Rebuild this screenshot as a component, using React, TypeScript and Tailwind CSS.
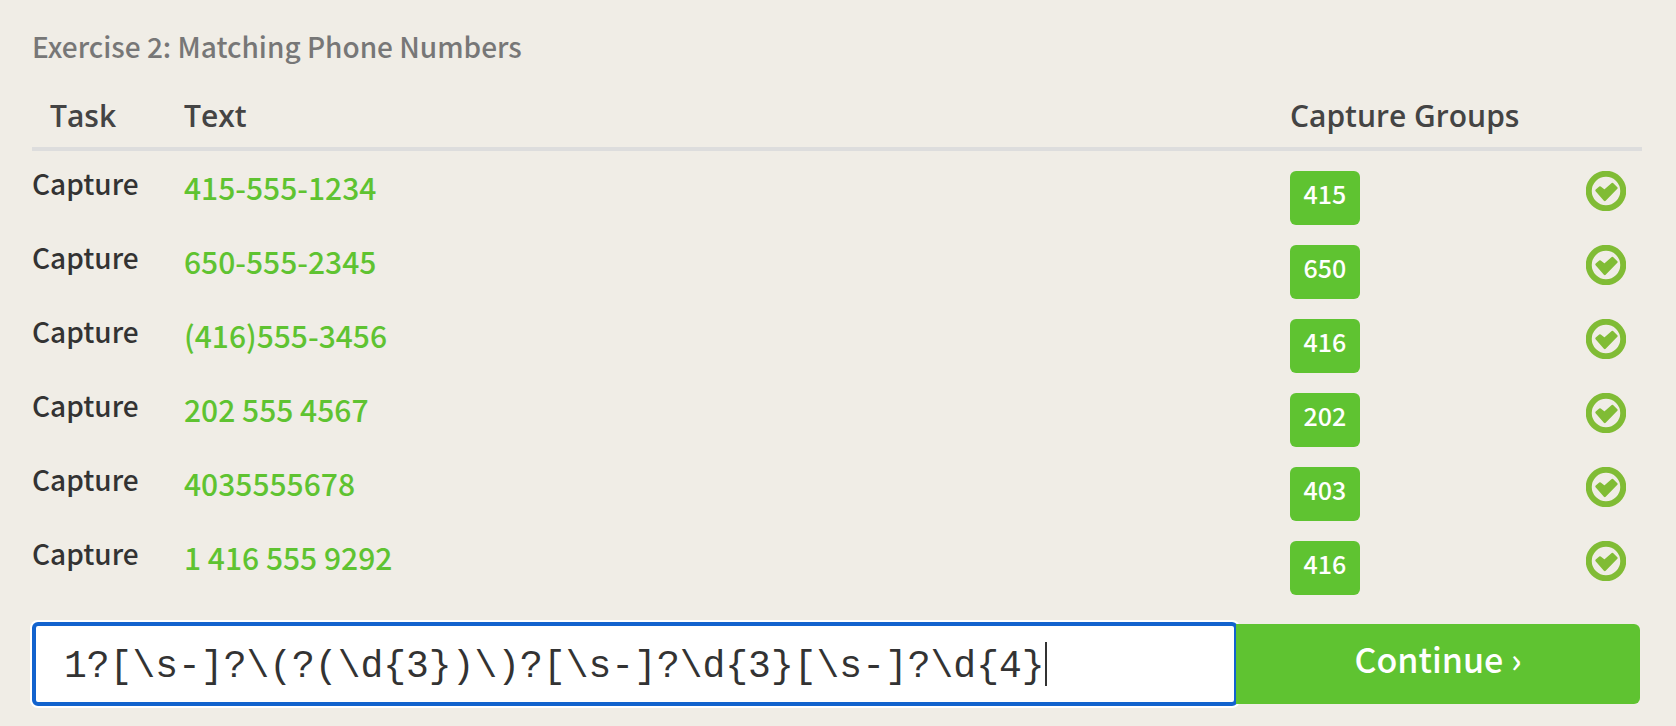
import { useState } from "react";

const rows = [
  { text: "415-555-1234", group: "415" },
  { text: "650-555-2345", group: "650" },
  { text: "(416)555-3456", group: "416" },
  { text: "202 555 4567", group: "202" },
  { text: "4035555678", group: "403" },
  { text: "1 416 555 9292", group: "416" },
];

function PassedIcon() {
  return (
    <svg className="ml-auto block size-10" viewBox="0 0 40 40" role="img" aria-label="Passed">
      <circle cx="20" cy="20" r="17.25" fill="none" stroke="#80bc35" strokeWidth="6" />
      <path
        d="M10.5 19.5 L14 16.5 L18.5 20 L26.5 13 L30.5 17 L18.8 29 Z"
        fill="#80bc35"
        stroke="#80bc35"
        strokeWidth="2.4"
        strokeLinejoin="round"
      />
    </svg>
  );
}

export default function App() {
  const [pattern, setPattern] = useState("1?[\\s-]?\\(?(\\d{3})\\)?[\\s-]?\\d{3}[\\s-]?\\d{4}");

  return (
    <main className="min-h-screen bg-[#f0ede6] pt-[22px] pr-[34px] pb-5 pl-8 font-['Noto_Sans_CJK_SC',sans-serif] font-medium">
      <h1 className="text-[28px] leading-12 text-[#777777]">Exercise 2: Matching Phone Numbers</h1>
      <table className="mt-[22px] w-full table-fixed border-collapse">
        <colgroup>
          <col className="w-[152px]" />
          <col />
          <col className="w-[256px]" />
          <col className="w-24" />
        </colgroup>
        <thead>
          <tr className="h-[57px] border-b-4 border-[#dddddd] text-left align-top font-['Open_Sans',sans-serif] text-3xl text-[#444444]">
            <th className="pl-[18px] leading-12 font-semibold">Task</th>
            <th className="leading-12 font-semibold">Text</th>
            <th className="leading-12 font-semibold whitespace-nowrap">Capture Groups</th>
            <th aria-label="Result"></th>
          </tr>
        </thead>
        <tbody>
          {rows.map((row) => (
            <tr key={row.text} className="h-[74px] align-top">
              <td className="pt-2 text-[28px] leading-12 text-[#333333]">Capture</td>
              <td className="pt-3 text-[30px] leading-12 text-[#5fc331]">{row.text}</td>
              <td className="pt-5">
                <span className="block h-[54px] w-[70px] rounded-md bg-[#5fc331] text-center text-[25px] leading-11 text-white">
                  {row.group}
                </span>
              </td>
              <td className="pt-5 pr-4">
                <PassedIcon />
              </td>
            </tr>
          ))}
        </tbody>
      </table>
      <form className="mt-[27px] flex items-center pr-0.5" onSubmit={(e) => e.preventDefault()}>
        <div className="relative h-[84px] w-3/4 shrink-0 rounded-md border-4 border-[#1263ce] bg-white font-['Liberation_Mono',monospace] text-[38px] font-normal text-[#333333] ring-2 ring-white">
          <input
            aria-label="Regular expression"
            className="h-full w-full bg-transparent pt-1 pl-7 caret-transparent outline-none"
            value={pattern}
            onChange={(e) => setPattern(e.target.value)}
            spellCheck={false}
            autoFocus
          />
          <span
            aria-hidden="true"
            className="pointer-events-none absolute inset-y-4 ml-7 w-0.5 bg-[#333333]"
            style={{ left: `${pattern.length}ch` }}
          />
        </div>
        <button className="relative -ml-0.5 h-20 flex-1 rounded-r-md bg-[#5fc331] pb-3 text-[34px] text-white">
          Continue ›
        </button>
      </form>
    </main>
  );
}
